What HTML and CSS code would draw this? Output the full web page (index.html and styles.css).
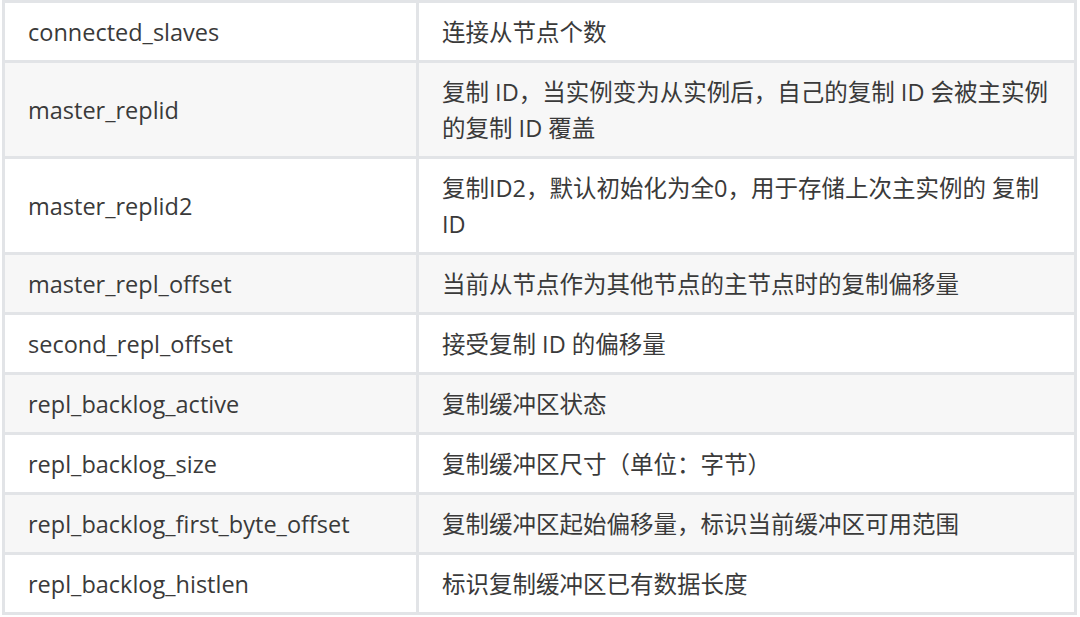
FILE: index.html
```html
<!DOCTYPE html>
<html lang="zh-CN">
<head>
<meta charset="utf-8">
<title>Redis replication info</title>
<link rel="stylesheet" href="styles.css">
</head>
<body>
<table class="info-table">
  <tbody>
    <tr class="row-odd"><td class="col-key">connected_slaves</td><td class="col-desc">连接从节点个数</td></tr>
    <tr class="row-even"><td class="col-key">master_replid</td><td class="col-desc">复制 ID，当实例变为从实例后，自己的复制 ID 会被主实例的复制 ID 覆盖</td></tr>
    <tr class="row-odd"><td class="col-key">master_replid2</td><td class="col-desc">复制ID2，默认初始化为全0，用于存储上次主实例的 复制ID</td></tr>
    <tr class="row-even"><td class="col-key">master_repl_offset</td><td class="col-desc">当前从节点作为其他节点的主节点时的复制偏移量</td></tr>
    <tr class="row-odd"><td class="col-key">second_repl_offset</td><td class="col-desc">接受复制 ID 的偏移量</td></tr>
    <tr class="row-even"><td class="col-key">repl_backlog_active</td><td class="col-desc">复制缓冲区状态</td></tr>
    <tr class="row-odd"><td class="col-key">repl_backlog_size</td><td class="col-desc">复制缓冲区尺寸（单位：字节）</td></tr>
    <tr class="row-even"><td class="col-key">repl_backlog_first_byte_offset</td><td class="col-desc">复制缓冲区起始偏移量，标识当前缓冲区可用范围</td></tr>
    <tr class="row-odd"><td class="col-key">repl_backlog_histlen</td><td class="col-desc">标识复制缓冲区已有数据长度</td></tr>
  </tbody>
</table>
</body>
</html>
```

FILE: styles.css
```css
html, body {
  margin: 0;
  padding: 0;
  background: #ffffff;
}

body {
  padding: 0 0 0 2px;
}

.info-table {
  border-collapse: collapse;
  width: 1075px;
  table-layout: fixed;
  font-family: "Open Sans", "Noto Sans CJK SC", sans-serif;
  font-size: 23.5px;
  line-height: 36px;
  color: #3a3a3a;
  margin-top: 0;
}

.info-table td {
  border: 3px solid #e2e4e7;
  padding: 11px 22px 10px 23px;
  vertical-align: middle;
  text-align: left;
}

.col-key {
  width: 366px;
}

.row-odd {
  background: #ffffff;
}

.row-even {
  background: #f7f7f7;
}
```
